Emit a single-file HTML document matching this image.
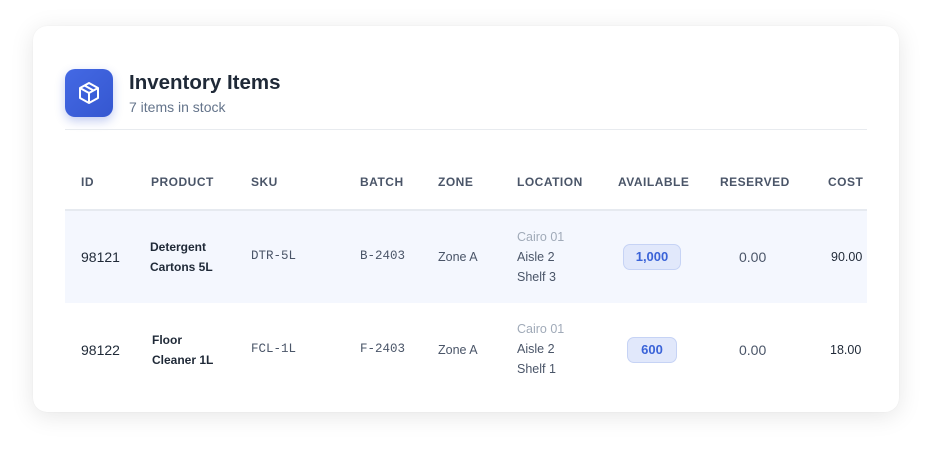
<!DOCTYPE html>
<html><head><style>
body{margin:0;width:931px;height:453px;background:#fff;font-family:"Liberation Sans",sans-serif;position:relative;overflow:hidden}
.card{position:absolute;left:33px;top:26px;width:866px;height:386px;background:#fff;border-radius:14px;box-shadow:0 4px 24px rgba(0,0,0,.10),0 0 1px rgba(0,0,0,.08)}
.a{position:absolute;white-space:nowrap}
.h{font-size:12px;font-weight:bold;color:#4a5568;letter-spacing:.5px;top:175px}
.mono{font-family:"Liberation Mono",monospace;font-size:12.5px;color:#4a5568}
.badge{background:#e1e8fb;border:1px solid #c6d3f5;border-radius:7px;color:#3a63d8;font-weight:bold;font-size:13px;text-align:center;height:24px;line-height:24px}
</style></head><body>
<div class="card"></div>
<div class="a" style="left:65px;top:69px;width:48px;height:48px;border-radius:10px;background:linear-gradient(135deg,#4469e4,#3557d0);box-shadow:0 4px 10px rgba(53,87,208,.3)">
<svg width="48" height="48" viewBox="0 0 48 48" fill="none" stroke="#fff" stroke-width="2" stroke-linejoin="round"><path d="M24 14l9 5v10l-9 5-9-5V19z"/><path d="M15 19l9 5 9-5M24 24v10M19.5 16.5l9 5"/></svg></div>
<div class="a" style="left:129px;top:71px;font-size:20.5px;font-weight:bold;color:#1f2937">Inventory Items</div>
<div class="a" style="left:129px;top:99px;font-size:14px;color:#64748b">7 items in stock</div>
<div class="a" style="left:65px;top:129px;width:802px;height:1px;background:#e8ebef"></div>
<div class="a h" style="left:81px">ID</div>
<div class="a h" style="left:151px">PRODUCT</div>
<div class="a h" style="left:251px">SKU</div>
<div class="a h" style="left:360px">BATCH</div>
<div class="a h" style="left:438px">ZONE</div>
<div class="a h" style="left:517px">LOCATION</div>
<div class="a h" style="left:618px">AVAILABLE</div>
<div class="a h" style="left:720px">RESERVED</div>
<div class="a h" style="left:828px">COST</div>
<div class="a" style="left:65px;top:209px;width:802px;height:2px;background:#e6eaf0"></div>
<div class="a" style="left:65px;top:211px;width:802px;height:92px;background:#f4f7fe"></div>

<div class="a" style="left:81px;top:249px;font-size:14px;color:#1f2937">98121</div>
<div class="a" style="left:150px;top:237px;font-size:12px;font-weight:bold;color:#1f2937;line-height:20px">Detergent<br>Cartons 5L</div>
<div class="a mono" style="left:251px;top:249px">DTR-5L</div>
<div class="a mono" style="left:360px;top:249px">B-2403</div>
<div class="a" style="left:438px;top:250px;font-size:12.5px;color:#4a5568">Zone A</div>
<div class="a" style="left:517px;top:227px;font-size:12.5px;line-height:20px;color:#4a5568"><span style="color:#a0aab8">Cairo 01</span><br>Aisle 2<br>Shelf 3</div>
<div class="a badge" style="left:623px;top:244px;width:56px">1,000</div>
<div class="a" style="left:739px;top:249px;font-size:14px;color:#4a5568">0.00</div>
<div class="a" style="left:831px;top:250px;font-size:12.5px;color:#1f2937">90.00</div>

<div class="a" style="left:81px;top:342px;font-size:14px;color:#1f2937">98122</div>
<div class="a" style="left:152px;top:330px;font-size:12px;font-weight:bold;color:#1f2937;line-height:20px">Floor<br>Cleaner 1L</div>
<div class="a mono" style="left:251px;top:342px">FCL-1L</div>
<div class="a mono" style="left:360px;top:342px">F-2403</div>
<div class="a" style="left:438px;top:343px;font-size:12.5px;color:#4a5568">Zone A</div>
<div class="a" style="left:517px;top:319px;font-size:12.5px;line-height:20px;color:#4a5568"><span style="color:#a0aab8">Cairo 01</span><br>Aisle 2<br>Shelf 1</div>
<div class="a badge" style="left:627px;top:337px;width:48px">600</div>
<div class="a" style="left:739px;top:342px;font-size:14px;color:#4a5568">0.00</div>
<div class="a" style="left:830px;top:343px;font-size:12.5px;color:#1f2937">18.00</div>
</body></html>
